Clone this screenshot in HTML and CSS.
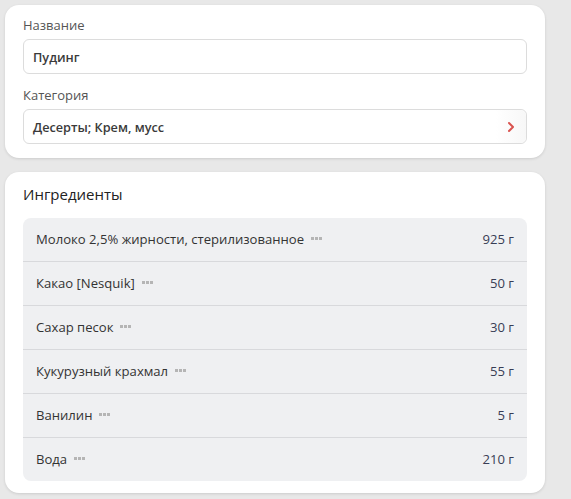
FILE: index.html
```html
<!DOCTYPE html>
<html lang="ru">
<head>
<meta charset="utf-8">
<link rel="stylesheet" href="styles.css">
</head>
<body>
<div class="page">
  <section class="card card-form">
    <label class="label">Название</label>
    <div class="input"><span class="value">Пудинг</span></div>
    <label class="label label-gap">Категория</label>
    <div class="input input-select">
      <span class="value">Десерты; Крем, мусс</span>
      <span class="chev">
        <svg width="10" height="12" viewBox="0 0 10 12"><path d="M3 2 L7 6 L3 10" fill="none" stroke="#d9534f" stroke-width="2" stroke-linecap="round" stroke-linejoin="round"/></svg>
      </span>
    </div>
  </section>
  <section class="card card-ing">
    <h2 class="title">Ингредиенты</h2>
    <div class="table">
      <div class="row"><span class="name">Молоко 2,5% жирности, стерилизованное<span class="dots"><i></i><i></i><i></i></span></span><span class="amt">925 г</span></div>
      <div class="row"><span class="name">Какао [Nesquik]<span class="dots"><i></i><i></i><i></i></span></span><span class="amt">50 г</span></div>
      <div class="row"><span class="name">Сахар песок<span class="dots"><i></i><i></i><i></i></span></span><span class="amt">30 г</span></div>
      <div class="row"><span class="name">Кукурузный крахмал<span class="dots"><i></i><i></i><i></i></span></span><span class="amt">55 г</span></div>
      <div class="row"><span class="name">Ванилин<span class="dots"><i></i><i></i><i></i></span></span><span class="amt">5 г</span></div>
      <div class="row"><span class="name">Вода<span class="dots"><i></i><i></i><i></i></span></span><span class="amt">210 г</span></div>
    </div>
  </section>
</div>
</body>
</html>
```
FILE: styles.css
```css
* { box-sizing: border-box; }
html, body { margin: 0; padding: 0; }
body {
  background: #e8e8e8;
  font-family: "Open Sans", "Noto Sans", sans-serif;
  color: #333;
  width: 571px;
  height: 499px;
  overflow: hidden;
}
.page {
  padding: 5px 0 0 5px;
  display: flex;
  flex-direction: column;
  gap: 14px;
}
.card {
  width: 540px;
  background: #fff;
  border-radius: 14px;
  box-shadow: 0 1px 3px rgba(0,0,0,0.12);
}
.card-form {
  padding: 11px 18px 14px 18px;
  display: flex;
  flex-direction: column;
}
.label {
  display: block;
  font-size: 13px;
  line-height: 18px;
  color: #555;
  margin-bottom: 5px;
}
.label-gap { margin-top: 12px; }
.input {
  height: 35px;
  border: 1px solid #dcdcdc;
  border-radius: 6px;
  display: flex;
  align-items: center;
  padding: 0 0 0 9px;
}
.value {
  font-size: 12.7px;
  font-weight: 600;
  color: #3a3a3a;
}
.input-select { justify-content: space-between; padding-right: 0; }
.chev {
  width: 30px;
  height: 33px;
  display: flex;
  align-items: center;
  justify-content: center;
  border-radius: 0 6px 6px 0;
  background: linear-gradient(90deg, #fff, #f7f7f7);
}
.card-ing {
  padding: 12px 18px 12px 18px;
}
.title {
  margin: 0 0 14px 0;
  font-size: 15px;
  line-height: 20px;
  font-weight: 400;
  color: #222;
}
.table {
  background: #eff0f2;
  border-radius: 8px;
  width: 504px;
}
.row {
  height: 44px;
  display: flex;
  align-items: center;
  justify-content: space-between;
  padding: 0 13px 2px 13px;
  border-top: 1px solid #d8d9dc;
  font-size: 13.1px;
}
.row:first-child { border-top: none; height: 43px; }
.name { color: #333; display: flex; align-items: center; }
.dots { display: inline-flex; gap: 1px; margin-left: 7px; }
.dots i { width: 3px; height: 3px; background: #b5b5b5; display: block; }
.amt { color: #383d55; }
```
